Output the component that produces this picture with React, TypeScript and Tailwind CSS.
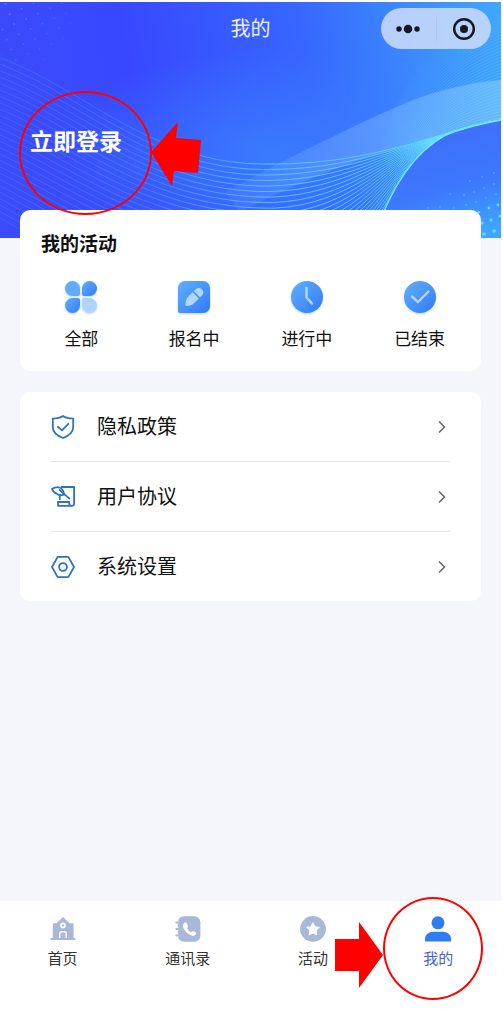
import type { ReactNode } from 'react';

const waveLines = Array.from({ length: 26 }, (_, i) => i / 25);
const fanLines = Array.from({ length: 36 }, (_, i) => i);
const mix = (a: number, b: number, t: number) => a + (b - a) * t;

function wavePath(t: number) {
  return (
    `M0 ${mix(56, 216, t)} C${mix(80, 80, t)} ${mix(84, 260, t)} ${mix(150, 150, t)} ${mix(161, 306, t)} ${mix(262, 300, t)} ${mix(162, 300, t)} ` +
    `C${mix(335, 385, t)} ${mix(163, 286, t)} ${mix(385, 388, t)} ${mix(150, 166, t)} 445 ${mix(132, 135, t)} ` +
    `C465 125 485 121 501 118`
  );
}

function HeaderArt() {
  return (
    <svg
      className="absolute inset-0 h-full w-full"
      viewBox="0 0 501 236"
      preserveAspectRatio="none"
      aria-hidden="true"
    >
      <defs>
        <linearGradient id="sky" x1="0" y1="0.2" x2="1" y2="0.1">
          <stop offset="0" stopColor="#3b4bfb" />
          <stop offset="0.25" stopColor="#3848ff" />
          <stop offset="0.6" stopColor="#3766ff" />
          <stop offset="0.82" stopColor="#3c8aff" />
          <stop offset="1" stopColor="#40a5ff" />
        </linearGradient>
        <radialGradient id="glow" cx="0.55" cy="0.65" r="0.45">
          <stop offset="0" stopColor="#3b80ff" stopOpacity="0.85" />
          <stop offset="1" stopColor="#3b80ff" stopOpacity="0" />
        </radialGradient>
        <linearGradient id="line" x1="0" y1="0" x2="501" y2="0" gradientUnits="userSpaceOnUse">
          <stop offset="0" stopColor="#5bb4ff" stopOpacity="0.2" />
          <stop offset="0.3" stopColor="#55b9ff" stopOpacity="0.38" />
          <stop offset="0.55" stopColor="#55cdff" stopOpacity="0.9" />
          <stop offset="1" stopColor="#6ae6ff" stopOpacity="0.7" />
        </linearGradient>
        <linearGradient id="ribbon" x1="0" y1="0" x2="1" y2="0">
          <stop offset="0" stopColor="#8cc0ff" stopOpacity="0.1" />
          <stop offset="0.5" stopColor="#8cc4ff" stopOpacity="0.35" />
          <stop offset="1" stopColor="#8fd3ff" stopOpacity="0.5" />
        </linearGradient>
        <linearGradient id="pool" x1="0.4" y1="0" x2="0.7" y2="1">
          <stop offset="0" stopColor="#406cfc" />
          <stop offset="0.6" stopColor="#3d78fd" />
          <stop offset="1" stopColor="#3fa6ff" />
        </linearGradient>
        <pattern id="dots" width="13" height="11" patternUnits="userSpaceOnUse" patternTransform="rotate(-24)">
          <circle cx="4" cy="4" r="1" fill="#7fb2ff" />
        </pattern>
        <radialGradient id="dotFade" cx="0" cy="0" r="1">
          <stop offset="0" stopColor="#fff" stopOpacity="0.6" />
          <stop offset="1" stopColor="#fff" stopOpacity="0" />
        </radialGradient>
        <mask id="dotMask">
          <rect width="90" height="90" fill="url(#dotFade)" />
        </mask>
      </defs>
      <rect width="501" height="236" fill="url(#sky)" />
      <rect width="501" height="236" fill="url(#glow)" />
      <rect width="90" height="90" fill="url(#dots)" mask="url(#dotMask)" />
      <path
        d="M225 190 C290 155 350 125 410 99 C445 86 475 80 501 78 V118 C460 128 440 136 420 140 C350 158 290 184 240 210Z"
        fill="url(#ribbon)"
      />
      <g fill="none" stroke="#67dcff" strokeWidth="0.8">
        {fanLines.map((i) => (
          <path
            key={i}
            strokeOpacity={0.1 + i * 0.014}
            d={`M${380 + i * 1.6} ${156 - i * 0.5} C${388 + i * 1.5} ${100 + i} ${425 + i} ${40 + i * 2.4} 501 ${4 + i * 3.2}`}
          />
        ))}
      </g>
      <g fill="none" stroke="url(#line)" strokeWidth="1">
        {waveLines.map((t) => (
          <path key={t} d={wavePath(t)} />
        ))}
      </g>
      <path d="M374 236 C391 184 414 150 446 133 C465 125 485 121 501 118 V236Z" fill="url(#pool)" />
      <path d="M374 236 C391 184 414 150 446 133 C465 125 485 121 501 118" fill="none" stroke="#72eaff" strokeWidth="1.4" />
      <g fill="#5fe0ff">
        {[[484, 232, 1.8], [494, 229, 1.8], [482, 221, 1.5], [491, 218, 1.6], [500, 214, 1.6], [479, 210, 1.3], [489, 206, 1.4], [498, 203, 1.4]].map(([x, y, r]) => (
          <circle key={`${x}-${y}`} cx={x} cy={y} r={r} />
        ))}
      </g>
      <g fill="#5fd0ff" opacity="0.5">
        {[[466, 203], [476, 200], [486, 196], [496, 192], [454, 206], [428, 206], [440, 205], [464, 193], [474, 190], [484, 186], [494, 182], [450, 192], [470, 179], [482, 175], [494, 171]].map(([x, y]) => (
          <circle key={`${x}-${y}`} cx={x} cy={y} r="0.9" />
        ))}
      </g>
    </svg>
  );
}

function BlueFill({ id }: { id: string }) {
  return (
    <defs>
      <linearGradient id={id} x1="0" y1="0" x2="1" y2="1">
        <stop offset="0" stopColor="#5fb1fd" />
        <stop offset="1" stopColor="#3279f6" />
      </linearGradient>
    </defs>
  );
}

const statusClass = 'h-9 w-9 drop-shadow-[0_1px_1px_rgba(60,130,250,0.35)]';

const activities: { label: string; icon: ReactNode }[] = [
  {
    label: '全部',
    icon: (
      <svg viewBox="0 0 36 36" className={statusClass} aria-hidden="true">
        <BlueFill id="petal" />
        <path d="M9.5 2A7.5 7.5 0 1 0 9.5 17H15a2 2 0 0 0 2-2V9.5A7.5 7.5 0 0 0 9.5 2Z" fill="#63acfb" />
        <path d="M26.5 2A7.5 7.5 0 1 1 26.5 17H21a2 2 0 0 1-2-2V9.5A7.5 7.5 0 0 1 26.5 2Z" fill="url(#petal)" />
        <path d="M9.5 34A7.5 7.5 0 1 1 9.5 19H15a2 2 0 0 1 2 2V26.5A7.5 7.5 0 0 1 9.5 34Z" fill="url(#petal)" />
        <path d="M26.5 34A7.5 7.5 0 1 0 26.5 19H21a2 2 0 0 0-2 2V26.5A7.5 7.5 0 0 0 26.5 34Z" fill="#b1d3fd" />
      </svg>
    ),
  },
  {
    label: '报名中',
    icon: (
      <svg viewBox="0 0 36 36" className={statusClass} aria-hidden="true">
        <BlueFill id="sign" />
        <path d="M9 2H27A7 7 0 0 1 34 9V27A7 7 0 0 1 27 34H4A2 2 0 0 1 2 32V9A7 7 0 0 1 9 2Z" fill="url(#sign)" />
        <path d="M16.6 13.2 22.8 19.4 18.3 23.9C16 26.2 13.5 26.8 10.8 27A1.3 1.3 0 0 1 9.4 25.4C9.6 22.4 10.2 19.6 12.1 17.7Z" fill="#b3d6fe" />
        <path d="M17.7 12.1 20.2 9.9A4.4 4.4 0 0 1 26.3 16.1L23.9 18.3Z" fill="#b3d6fe" />
      </svg>
    ),
  },
  {
    label: '进行中',
    icon: (
      <svg viewBox="0 0 36 36" className={statusClass} aria-hidden="true">
        <BlueFill id="clock" />
        <circle cx="18" cy="18" r="16" fill="url(#clock)" />
        <path d="M17.5 9V18.5L23 24.5" fill="none" stroke="#b3d6fe" strokeWidth="2.4" strokeLinecap="round" strokeLinejoin="round" />
      </svg>
    ),
  },
  {
    label: '已结束',
    icon: (
      <svg viewBox="0 0 36 36" className={statusClass} aria-hidden="true">
        <BlueFill id="done" />
        <circle cx="18" cy="18" r="16" fill="url(#done)" />
        <path d="M10 17.5 16 23 26.5 12.5" fill="none" stroke="#b3d6fe" strokeWidth="2.4" strokeLinecap="round" strokeLinejoin="round" />
      </svg>
    ),
  },
];

const menuSvg = {
  viewBox: '0 0 24 24',
  className: 'h-6 w-6',
  fill: 'none',
  stroke: '#2b73bf',
  strokeWidth: 1.8,
  strokeLinecap: 'round' as const,
  strokeLinejoin: 'round' as const,
  'aria-hidden': true,
};

const menu: { label: string; icon: ReactNode }[] = [
  {
    label: '隐私政策',
    icon: (
      <svg {...menuSvg}>
        <path d="M12 1C9.2 3 5.8 3.6 1.8 3.6V12C1.8 17.6 6.4 20.8 12 23C17.6 20.8 22.2 17.6 22.2 12V3.6C18.2 3.6 14.8 3 12 1Z" />
        <path d="M6.9 11.8 11 15.4 17.4 8.8" />
      </svg>
    ),
  },
  {
    label: '用户协议',
    icon: (
      <svg {...menuSvg}>
        <path d="M10.5 2H23.1V18.4A2.4 2.4 0 0 1 20.7 20.8H7V17H18.2V18.4A2.4 2.4 0 0 0 20.7 20.8" />
        <path d="M1 4C4.2 1.8 8 1.7 10.4 3.6 12.4 5.1 13.2 7.3 12.8 9.6 10.4 10.4 7.6 10.3 6 8.8 3.6 8 1.8 6.4 1 4Z" />
        <path d="M8.6 5 18.4 13.6M8.8 14V11" />
      </svg>
    ),
  },
  {
    label: '系统设置',
    icon: (
      <svg {...menuSvg}>
        <path d="M6.7 1.9H17.3L23 12 17.3 22.1H6.7L1 12Z" />
        <circle cx="12" cy="12" r="3.9" />
      </svg>
    ),
  },
];

const tabs: { label: string; icon: ReactNode; active?: boolean }[] = [
  {
    label: '首页',
    icon: (
      <svg viewBox="0 0 28 28" className="h-7 w-7" aria-hidden="true">
        <path d="M14 2 20.5 8.2H23.2A1.4 1.4 0 0 1 24.6 9.6V23H26.4V25H1.6V23H3.8V9.6A1.4 1.4 0 0 1 5.2 8.2H7.5Z" fill="#a9b8d7" />
        <circle cx="14" cy="10.4" r="2" fill="none" stroke="#fff" strokeWidth="1.7" />
        <path d="M10.8 23V18.4A1.7 1.7 0 0 1 12.5 16.7H15.5A1.7 1.7 0 0 1 17.2 18.4V23" fill="none" stroke="#fff" strokeWidth="1.5" />
      </svg>
    ),
  },
  {
    label: '通讯录',
    icon: (
      <svg viewBox="0 0 28 28" className="h-7 w-7" aria-hidden="true">
        <rect x="3.8" y="1.2" width="22.6" height="25.6" rx="6" fill="#a9b8d7" />
        <path d="M2.8 7.5H4.6M2.8 14H4.6M2.8 20.5H4.6" stroke="#fff" strokeWidth="3.6" />
        <path d="M2.4 7.5H6M2.4 14H6M2.4 20.5H6" stroke="#a9b8d7" strokeWidth="2.2" strokeLinecap="round" />
        <path d="M10.3 7.9C11.6 7.1 12.9 7.8 13.4 9.3L13.9 10.9C14.2 12 13.1 12.7 13.4 13.6 13.9 15.1 15.1 16.4 16.5 16.9 17.4 17.2 18 16 19.1 16.2L20.8 16.8C22.2 17.3 22.5 18.7 21.5 19.8 19.8 21.7 16.3 20.8 13.4 18.3 9.9 15.2 7.4 10.2 10.3 7.9Z" fill="#fff" />
      </svg>
    ),
  },
  {
    label: '活动',
    icon: (
      <svg viewBox="0 0 28 28" className="h-7 w-7" aria-hidden="true">
        <circle cx="14" cy="14" r="12.9" fill="#a9b8d7" />
        <path d="M14 8 15.9 11.8 20 12.4 17 15.4 17.7 19.6 14 17.6 10.3 19.6 11 15.4 8 12.4 12.1 11.8Z" fill="#fff" stroke="#fff" strokeWidth="1.2" strokeLinejoin="round" />
      </svg>
    ),
  },
  {
    label: '我的',
    active: true,
    icon: (
      <svg viewBox="0 0 28 28" className="h-7 w-7" fill="#2f7cf6" aria-hidden="true">
        <circle cx="14" cy="7.8" r="6.5" />
        <path d="M1 26.6V24.2C1 19.6 4.8 16.8 9.2 16.8H18.8C23.2 16.8 27 19.6 27 24.2V26.6Z" />
      </svg>
    ),
  },
];

export default function App() {
  return (
    <div className="flex min-h-screen flex-col border-t-2 border-r-2 border-[#fcfcfa] bg-[#f4f6fb] font-[Inter,'Noto_Sans_CJK_SC',sans-serif] text-[#111]">
      <header className="relative pb-20">
        <HeaderArt />
        <div className="relative grid grid-cols-[1fr_auto_1fr] items-center pt-1.5">
          <h1 className="col-start-2 text-xl leading-6 text-white/90">我的</h1>
          <div className="mr-2.5 flex h-[41px] w-[110px] items-center justify-self-end rounded-full bg-[#c4d8fb]/90">
            <button aria-label="更多" className="flex h-full flex-1 items-center justify-center">
              <svg viewBox="0 0 26 10" className="h-2.5 w-[26px]" fill="#111820" aria-hidden="true">
                <circle cx="4" cy="5" r="2.7" />
                <circle cx="13" cy="5" r="4.3" />
                <circle cx="22" cy="5" r="2.7" />
              </svg>
            </button>
            <span className="h-6 w-px bg-[#adc6f0]" />
            <button aria-label="关闭" className="flex h-full flex-1 items-center justify-center">
              <svg viewBox="0 0 24 24" className="h-6 w-6" aria-hidden="true">
                <circle cx="12" cy="12" r="9.8" fill="none" stroke="#111820" strokeWidth="2.4" />
                <circle cx="12" cy="12" r="4" fill="#111820" />
              </svg>
            </button>
          </div>
        </div>
        <div className="relative mt-[77px] ml-[30px] w-fit">
          <a href="#login" className="block text-[23px] leading-8 font-bold text-white">
            立即登录
          </a>
          <span className="pointer-events-none absolute -top-[35px] -left-[11px] z-20 h-[124px] w-[133px] rounded-[50%] border-2 border-[#f00]" />
          <svg viewBox="0 0 50 64" className="pointer-events-none absolute -top-1 left-[121px] z-20 h-16 w-[50px]" fill="#f00" aria-hidden="true">
            <path d="M0 30 27 0 25 16 50 18 47 51 23 49 21 64Z" />
          </svg>
        </div>
      </header>

      <main className="relative -mt-7 flex-1 px-5">
        <section className="rounded-[10px] bg-white px-[5px] pt-[21px] pb-5">
          <h2 className="px-4 text-[19px] leading-7 font-bold">我的活动</h2>
          <div className="mt-5 grid grid-cols-4">
            {activities.map((item) => (
              <button key={item.label} className="flex flex-col items-center gap-3">
                {item.icon}
                <span className="text-[17px] leading-6">{item.label}</span>
              </button>
            ))}
          </div>
        </section>

        <ul className="mt-[21px] divide-y divide-[#e8e8ea] rounded-[10px] bg-white px-[31px]">
          {menu.map((item) => (
            <li key={item.label}>
              <a href="#menu" className="flex h-[69px] items-center">
                {item.icon}
                <span className="ml-[22px] flex-1 text-[20px] leading-7">{item.label}</span>
                <svg viewBox="0 0 8 14" className="mr-1 h-3.5 w-2" fill="none" stroke="#666" strokeWidth="1.5" aria-hidden="true">
                  <path d="M1 1.5 6.5 7 1 12.5" />
                </svg>
              </a>
            </li>
          ))}
        </ul>
      </main>

      <nav className="grid grid-cols-4 bg-white pt-3.5 pb-[38px]">
        {tabs.map((tab) => (
          <div key={tab.label} className="relative flex justify-center">
            <a
              href="#tab"
              className={`flex flex-col items-center gap-1 text-[15px] leading-6 ${tab.active ? 'text-[#4560dc]' : 'text-[#333]'}`}
            >
              {tab.icon}
              {tab.label}
            </a>
            {tab.active && (
              <>
                <span className="pointer-events-none absolute -top-[18px] left-[7px] h-[103px] w-[100px] rounded-[50%] border-2 border-[#f00]" />
                <svg viewBox="0 0 48 66" className="pointer-events-none absolute top-[7px] -left-[41px] h-[66px] w-12" fill="#f00" aria-hidden="true">
                  <path d="M0 17H24V0L48 33 24 66V49H0Z" />
                </svg>
              </>
            )}
          </div>
        ))}
      </nav>
    </div>
  );
}
